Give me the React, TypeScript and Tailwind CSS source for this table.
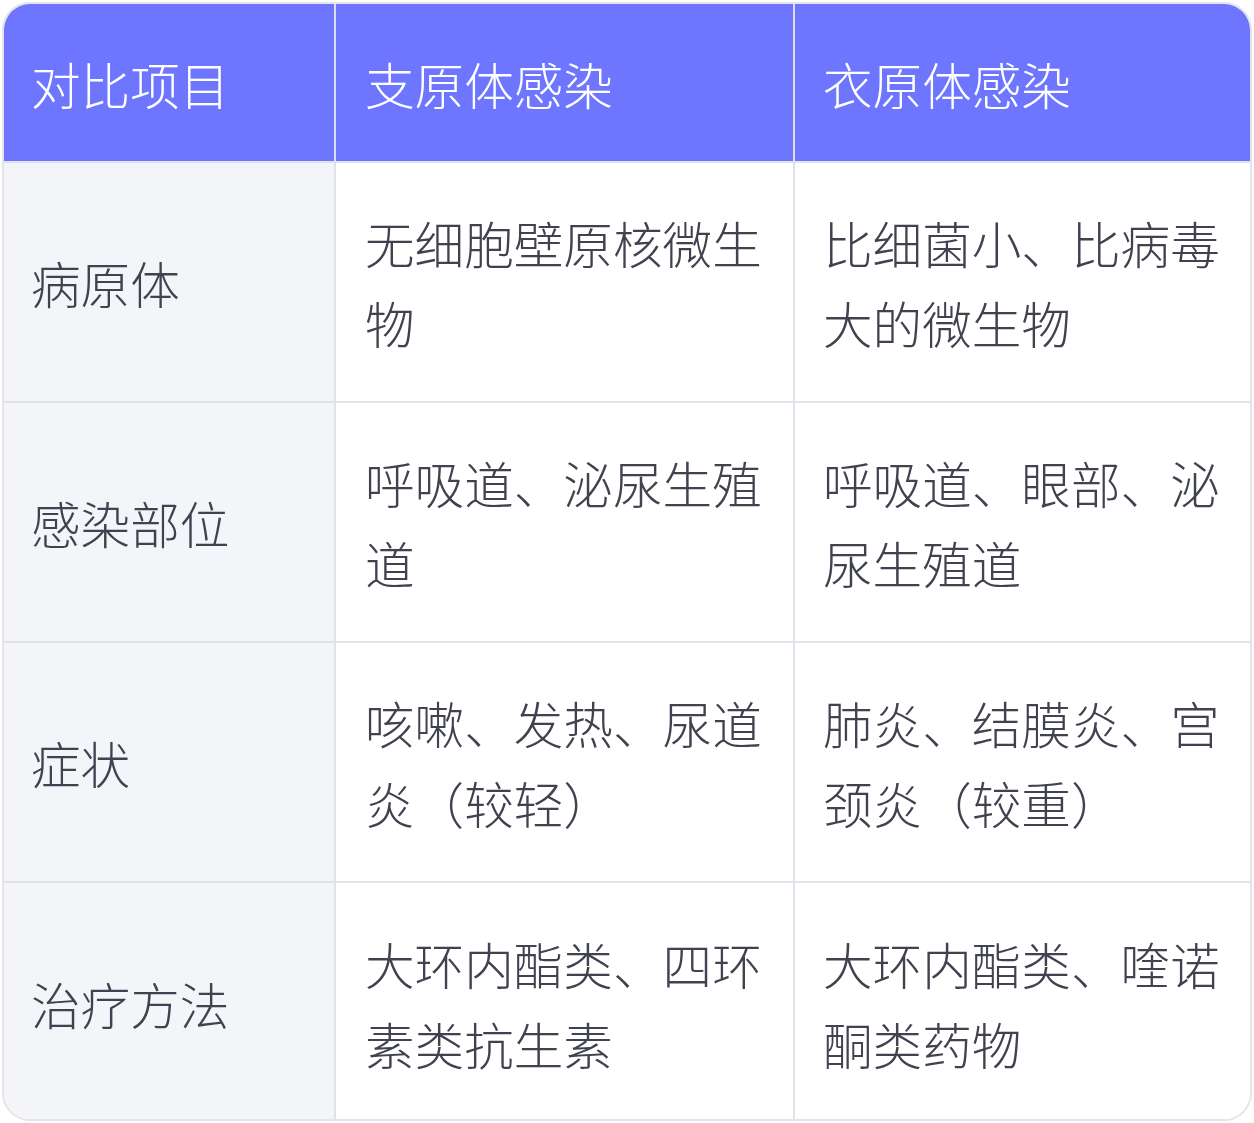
import React from 'react';

const rows: { label: string; a: string; b: string }[] = [
  { label: '病原体', a: '无细胞壁原核微生物', b: '比细菌小、比病毒大的微生物' },
  { label: '感染部位', a: '呼吸道、泌尿生殖道', b: '呼吸道、眼部、泌尿生殖道' },
  { label: '症状', a: '咳嗽、发热、尿道炎（较轻）', b: '肺炎、结膜炎、宫颈炎（较重）' },
  { label: '治疗方法', a: '大环内酯类、四环素类抗生素', b: '大环内酯类、喹诺酮类药物' },
];

const font = { fontFamily: '"Noto Sans CJK SC", "Noto Sans", sans-serif' };

export default function App() {
  return (
    <div className="w-[1254px] h-[1123px] bg-white p-[2px]" style={font}>
      <div className="w-full h-full rounded-[28px] border-2 border-[#e4e4ea] overflow-hidden">
        <table className="w-full h-full table-fixed border-collapse text-[49.6px] leading-[80px] font-light">
          <colgroup>
            <col className="w-[331px]" />
            <col className="w-[459px]" />
            <col />
          </colgroup>
          <thead>
            <tr className="bg-[#6e76ff] text-white h-[158px]">
              <th className="font-light text-left pl-[27px] pr-4 border-r-2 border-[#dcdde6]">对比项目</th>
              <th className="font-light text-left pl-[29px] pr-4 border-r-2 border-[#dcdde6]">支原体感染</th>
              <th className="font-light text-left pl-[28px] pr-4">衣原体感染</th>
            </tr>
          </thead>
          <tbody className="text-[#40434f]">
            {rows.map((r) => (
              <tr key={r.label} className="border-t-2 border-[#e2e3ea] h-[240px]">
                <td className="bg-[#f4f5f9] pl-[27px] pr-4 border-r-2 border-[#e2e3ea]">{r.label}</td>
                <td className="bg-white pl-[29px] pr-[10px] border-r-2 border-[#e2e3ea]">{r.a}</td>
                <td className="bg-white pl-[28px] pr-[10px]">{r.b}</td>
              </tr>
            ))}
          </tbody>
        </table>
      </div>
    </div>
  );
}
